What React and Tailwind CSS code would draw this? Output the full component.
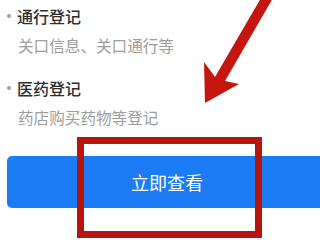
import React from "react";

const font = { fontFamily: '"Noto Sans CJK SC", "Noto Sans", sans-serif' };

function Item({ title, desc }) {
  return (
    <div className="flex flex-col">
      <div className="flex items-center h-[32px]">
        <span className="w-[4px] h-[4px] rounded-full bg-[#a0a0a0] ml-[7px] mr-[6px]"></span>
        <span className="text-[16px] leading-[32px] font-medium text-[#2e2e2e]">{title}</span>
      </div>
      <div className="pl-[18px] h-[26px] text-[15.6px] leading-[26px] text-[#9d9d9d]">{desc}</div>
    </div>
  );
}

export default function App() {
  return (
    <div className="relative w-[320px] h-[240px] overflow-hidden bg-white" style={font}>
      <div className="flex flex-col">
        <Item title="通行登记" desc="关口信息、关口通行等" />
        <div className="h-[14px]"></div>
        <Item title="医药登记" desc="药店购买药物等登记" />
        <div className="mt-[26px] ml-[7px] -mr-[8px] h-[52px] rounded-[5px] bg-[#1b7cf6] flex items-center justify-center">
          <span className="text-[18px] text-white -ml-[1px]">立即查看</span>
        </div>
      </div>

      {/* annotation overlay */}
      <div className="absolute left-[77px] top-[137px] w-[185px] h-[101px] border-[7px] border-[#b8140e]"></div>
      <svg className="absolute left-0 top-0" width="320" height="240" viewBox="0 0 320 240">
        <polygon
          points="261,-2 273,-2 225,81 239,84 205,103 204,62 215,77"
          fill="#c4150f"
        />
      </svg>
    </div>
  );
}
